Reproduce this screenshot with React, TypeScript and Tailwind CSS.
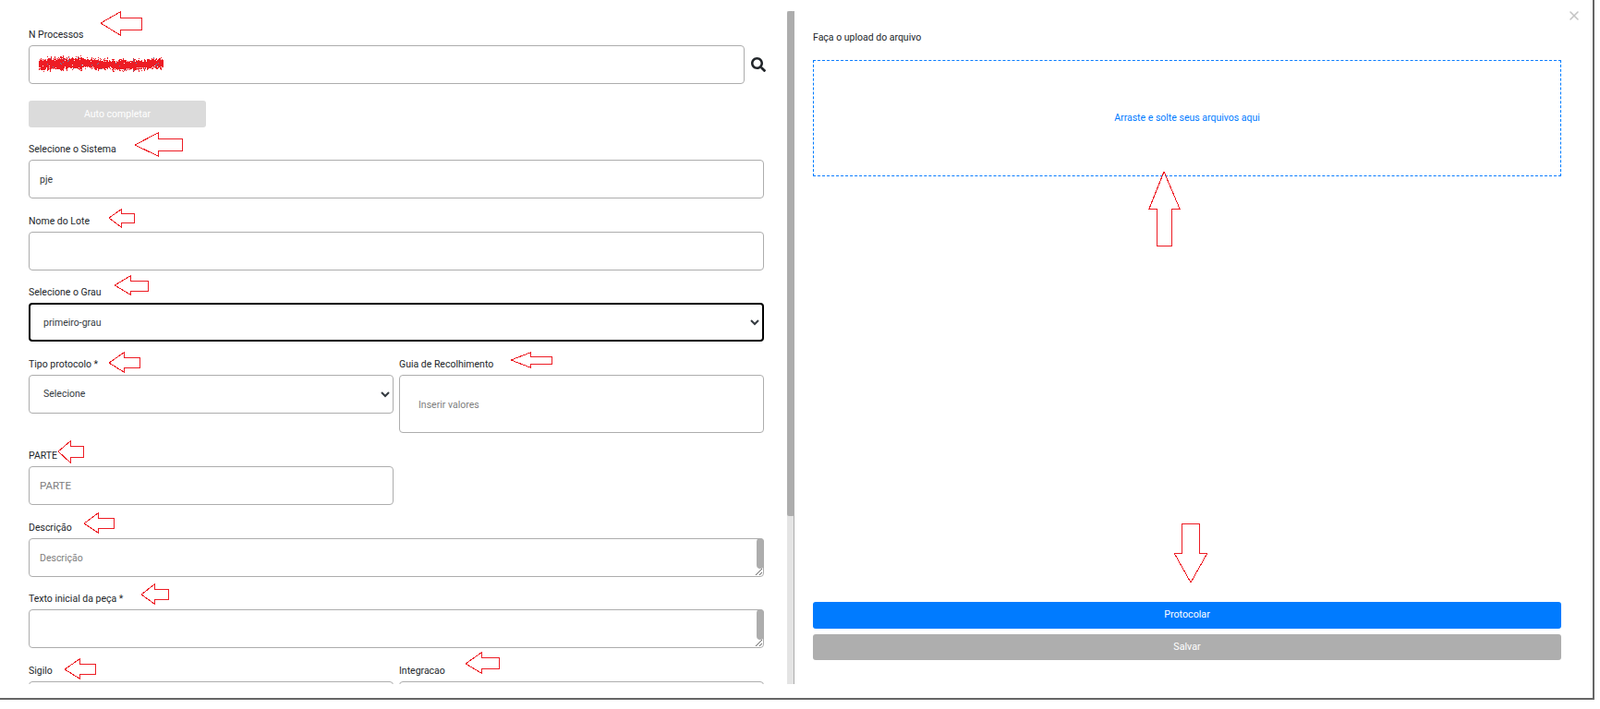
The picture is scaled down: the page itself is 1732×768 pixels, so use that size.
import type { ReactNode } from "react";
import { FaSearch } from "react-icons/fa";
import { X } from "lucide-react";

const inputClass =
  "block h-[42px] w-full rounded-[4px] border border-[#adadad] bg-white px-[11px] text-[10.5px] text-[#343a40] outline-none placeholder:text-[#7d7d7d]";
const selectClass =
  "block h-[42px] w-full appearance-auto rounded-[4px] border border-[#adadad] bg-white pl-[11px] pr-[1px] text-[10.5px] text-[#343a40] outline-none";
const textareaClass =
  "block h-[42px] w-full resize-y overflow-hidden rounded-[4px] border border-[#adadad] bg-white px-[11px] py-[12px] text-[10.5px] leading-[18px] text-[#343a40] outline-none placeholder:text-[#7d7d7d]";

// setas vermelhas desenhadas por cima do print
const arrows = [
  "109,25 130,13 130,19 153,19 153,32 130,32 130,38",
  "146,157 171,144 171,150 197,150 197,163 171,163 171,169",
  "118,236 131,227 131,231 145,231 145,241 131,241 131,246",
  "124,309 141,299 141,304 160,304 160,315 141,315 141,319",
  "118,393 134,382 134,387 151,387 151,398 134,398 134,403",
  "553,390 574,382 574,386 597,386 597,394 574,394 574,398",
  "63,489 76,478 76,483 90,483 90,495 76,495 76,501",
  "91,567 106,556 106,561 123,561 123,572 106,572 106,577",
  "153,644 167,633 167,638 182,638 182,649 167,649 167,654",
  "70,725 86,714 86,719 103,719 103,730 86,730 86,735",
  "504,719 521,707 521,712 540,712 540,724 521,724 521,729",
  "1260,186 1277,226 1268,226 1268,266 1252,266 1252,226 1244,226",
  "1279,567 1298,567 1298,599 1307,599 1289,631 1271,599 1279,599",
];

// rabisco que esconde o numero do processo
const scribble: { x: number; y: number; c: string }[] = [];
let seed = 7;
const rand = () => {
  seed = (seed * 16807) % 2147483647;
  return seed / 2147483647;
};
for (let x = 42; x < 177; x++) {
  const center = 69 + Math.sin(x / 17) * 1.2;
  const half = 4.5 + rand() * 3.5 + (x < 90 ? 1 : 0);
  for (let y = Math.floor(center - half); y < center + half; y++) {
    const edge = Math.abs(y - center) / half;
    if (rand() > edge * edge * edge * edge * 0.95) {
      scribble.push({ x, y, c: rand() < 0.02 ? "#5b86b0" : "#ed1c24" });
    }
  }
}

const Field = ({ label, children, className = "" }: { label: string; children: ReactNode; className?: string }) => (
  <div className={className}>
    <label className="mb-[4px] block h-[14px] text-[10.5px] leading-[14px] text-[#212529]">{label}</label>
    {children}
  </div>
);

// barra de rolagem do textarea, o navegador headless nao pinta a nativa
const TextArea = ({ placeholder }: { placeholder?: string }) => (
  <div className="relative">
    <textarea className={textareaClass} placeholder={placeholder} />
    <div className="absolute right-0 top-0 h-[33px] w-2 rounded-[4px] bg-[#adadad]" />
  </div>
);

const App = () => {
  return (
    <div className="relative h-[768px] w-[1732px] overflow-hidden bg-white font-[Roboto,sans-serif]">
      <div className="relative flex h-[758px] w-[1726px] border-r-2 border-b-2 border-[#666666]">
        <div className="flex items-start pt-[12px]">
          <div className="h-[729px] w-[852px] overflow-hidden">
            <form className="w-[827px] pl-[31px] pt-[19px]">
              <Field label="N Processos">
                <div className="flex items-center">
                  <input className={`${inputClass} !w-[775px] shrink-0`} />
                  <FaSearch className="ml-[7px] h-[16px] w-[16px] shrink-0 text-[#212529]" />
                </div>
              </Field>
              <button
                type="button"
                className="mt-[18px] block h-[29px] w-[192px] rounded-[3px] bg-[#dbdbdb] text-[10.5px] text-white"
              >
                Auto completar
              </button>
              <Field label="Selecione o Sistema" className="mt-[17.2px]">
                <input className={inputClass} defaultValue="pje" />
              </Field>
              <Field label="Nome do Lote" className="mt-[17.6px]">
                <input className={inputClass} />
              </Field>
              <Field label="Selecione o Grau" className="mt-[17.6px]">
                <select className={`${selectClass} !border-2 !border-black !pl-[10px]`} defaultValue="primeiro-grau">
                  <option>primeiro-grau</option>
                </select>
              </Field>
              <div className="mt-[17.6px] grid grid-cols-2 gap-x-[6px]">
                <Field label="Tipo protocolo *">
                  <select className={selectClass} defaultValue="Selecione">
                    <option>Selecione</option>
                  </select>
                </Field>
                <Field label="Guia de Recolhimento">
                  <input className={`${inputClass} !h-[63.5px] !px-[20px] pt-[2px]`} placeholder="Inserir valores" />
                </Field>
              </div>
              <div className="mt-[17.6px] grid grid-cols-2 gap-x-[6px]">
                <Field label="PARTE">
                  <input className={`${inputClass} !text-[11.5px]`} placeholder="PARTE" />
                </Field>
              </div>
              <Field label="Descrição" className="mt-[17.6px]">
                <TextArea placeholder="Descrição" />
              </Field>
              <Field label="Texto inicial da peça *" className="mt-[17.6px]">
                <TextArea />
              </Field>
              <div className="mt-[17.6px] grid grid-cols-2 gap-x-[6px]">
                <Field label="Sigilo">
                  <input className={inputClass} />
                </Field>
                <Field label="Integracao">
                  <input className={inputClass} />
                </Field>
              </div>
            </form>
          </div>
          <div className="h-[729px] w-2 border-r border-[#adadad] bg-[#e4e4e4]">
            <div className="h-[547px] w-2 rounded-[2px] bg-[#adadad]" />
          </div>
        </div>

        <div className="flex flex-1 flex-col pb-[41px] pl-[20px] pr-[34px] pt-[34px]">
          <p className="mb-[17px] h-[14px] text-[10.5px] leading-[14px] text-[#212529]">Faça o upload do arquivo</p>
          <div className="flex h-[126px] items-center justify-center border border-dashed border-[#007bff] text-[10.5px] text-[#007bff]">
            Arraste e solte seus arquivos aqui
          </div>
          <div className="mt-auto flex flex-col gap-[6px]">
            <button type="button" className="h-[29px] rounded-[3px] bg-[#007bff] text-[10.7px] text-white">
              Protocolar
            </button>
            <button type="button" className="h-[28px] rounded-[3px] bg-[#aeaeae] text-[10.7px] text-white">
              Salvar
            </button>
          </div>
        </div>

        <X className="absolute left-[1696px] top-[9px] h-[16px] w-[16px] text-[#c4c4c4]" strokeWidth={2.4} />
      </div>

      <svg className="pointer-events-none absolute left-0 top-0" width={1732} height={768} shapeRendering="crispEdges">
        {scribble.map((p, i) => (
          <rect key={i} x={p.x} y={p.y} width={1} height={1} fill={p.c} />
        ))}
        {arrows.map((points) => (
          <polygon key={points} points={points} fill="#ffffff" stroke="#ed1c24" strokeWidth={1} />
        ))}
      </svg>
    </div>
  );
};

export default App;
